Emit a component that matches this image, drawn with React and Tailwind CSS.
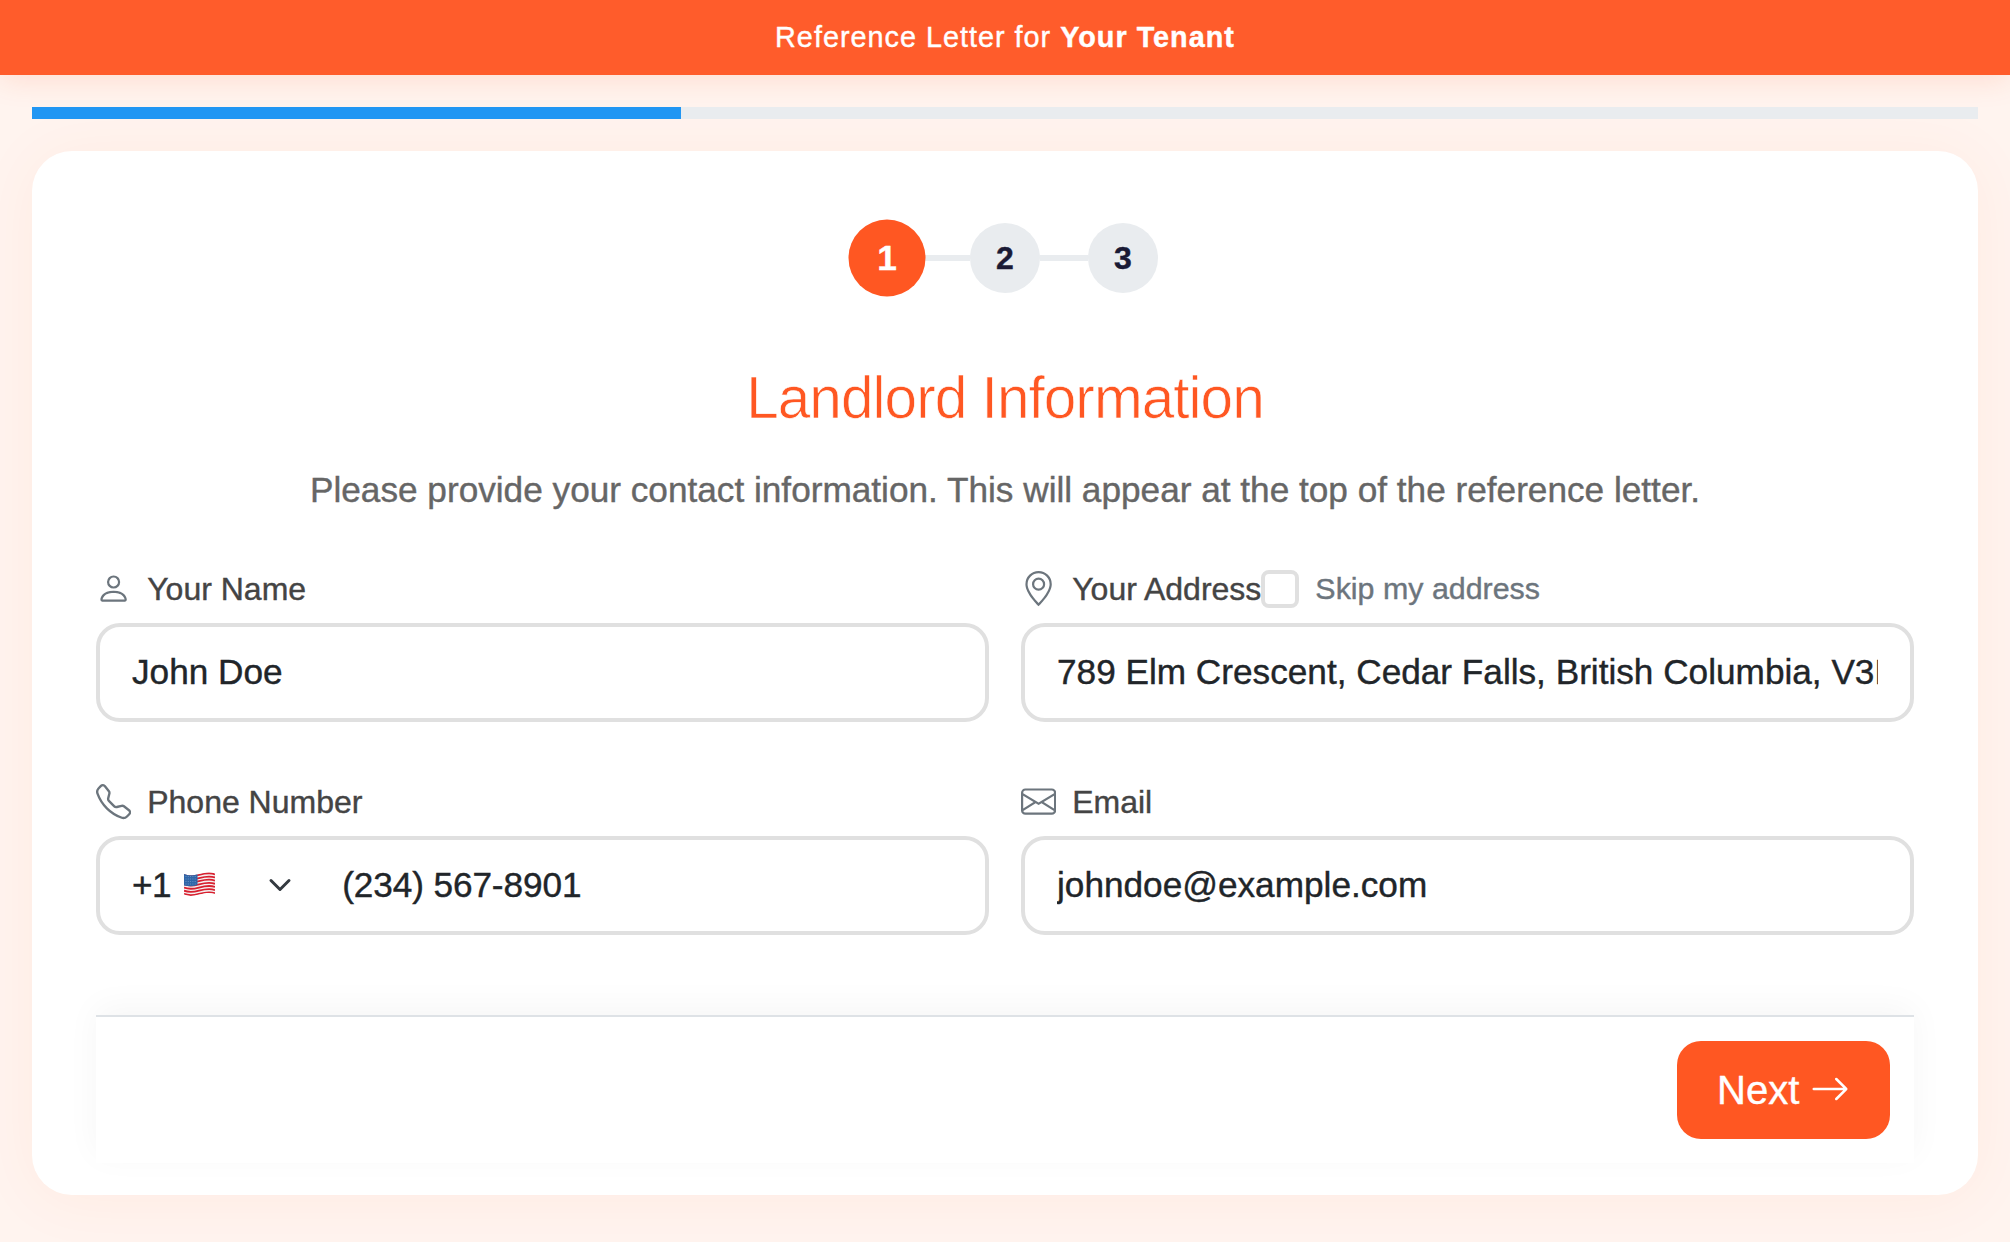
import React from "react";
import { BsPerson, BsGeoAlt, BsTelephone, BsEnvelope, BsArrowRight } from "react-icons/bs";

function Flag() {
  const stripes = [0, 1, 2, 3, 4, 5, 6];
  const wave = (y) =>
    `M0 ${y} C5 ${y + 2} 9 ${y + 1.6} 15 ${y} S26 ${y - 2.4} 31 ${y - 0.6}`;
  return (
    <svg className="ml-[13px] -mt-0.5 h-[25px] w-[31px] shrink-0" viewBox="0 0 31 25">
      <clipPath id="flag">
        <path d="M0 2 C5 4 9 3.6 15 2 S26 -.4 31 1.4 V22 C26 20.2 21 21 15 22.6 S5 24.6 0 22.6 Z" />
      </clipPath>
      <g clipPath="url(#flag)">
        <rect width="31" height="25" fill="#f4f1f1" />
        {stripes.map((i) => (
          <path key={i} d={wave(2.9 + i * 3.16)} stroke="#d8202f" strokeWidth="1.8" fill="none" />
        ))}
        <path d="M0 0 H13.5 V13 C9 14.6 5 14.8 0 13.6 Z" fill="#2f66a8" />
        {[4.5, 7, 9.5, 12].map((y) => (
          <path key={y} d={`M1.5 ${y} H13`} stroke="#7fa5cf" strokeWidth=".7" strokeDasharray="1 1.3" />
        ))}
      </g>
    </svg>
  );
}

function Label({ icon: Icon, children }) {
  return (
    <span className="flex items-center gap-4 text-[32px] leading-[48px] text-[#444]">
      <Icon className="size-[35.2px] shrink-0 text-[#6c757d]" />
      {children}
    </span>
  );
}

const box =
  "h-[99px] w-full rounded-3xl border-4 border-[#e0e0e0] bg-white text-[35.2px] text-[#212529] outline-none";

function Step({ n, active }) {
  return (
    <div
      className={
        active
          ? "flex size-[70px] scale-110 items-center justify-center rounded-full bg-[#ff5722] text-[32px] font-bold text-white"
          : "flex size-[70px] items-center justify-center rounded-full bg-[#e9ecef] text-[32px] font-bold text-[#1a1a35]"
      }
    >
      {n}
    </div>
  );
}

export default function App() {
  return (
    <div className="h-[1242px] w-full overflow-hidden bg-[#fff4ef] font-['Liberation_Sans',Arial,sans-serif] [-webkit-text-stroke:0.4px]">
      <header className="flex h-[75px] items-center justify-center bg-[#ff5c2b] text-[28.8px] tracking-[1px] whitespace-pre text-white shadow-[0_4px_30px_rgba(255,87,34,0.15)]">
        <span>Reference Letter for </span>
        <strong>Your Tenant</strong>
      </header>

      <div className="relative mx-8 mt-8 h-3 bg-[#e9ecef]">
        <div className="h-full w-1/3 bg-[#2196f3]" />
      </div>

      <main className="mx-8 mt-8 flex h-[1044px] flex-col rounded-[40px] bg-white px-16 pt-[72px] pb-8 shadow-[0_4px_64px_rgba(255,87,34,0.06)]">
        <div className="flex h-[70px] items-center justify-center">
          <Step n="1" active />
          <div className="h-1.5 w-12 bg-[#e9ecef]" />
          <Step n="2" />
          <div className="h-1.5 w-12 bg-[#e9ecef]" />
          <Step n="3" />
        </div>

        <h1 className="mt-[70px] text-center text-[58.5px] leading-[70px] tracking-[-0.95px] text-[#ff5722] [-webkit-text-stroke:0.7px_white]">
          Landlord Information
        </h1>
        <p className="mt-[30px] text-center text-[35.2px] leading-[53px] text-[#666]">
          Please provide your contact information. This will appear at the top of the reference letter.
        </p>

        <form className="mt-[49px] grid grid-cols-2 gap-x-8 gap-y-14">
          <div className="flex flex-col gap-[10px]">
            <Label icon={BsPerson}>Your Name</Label>
            <input className={box + " px-8 pb-0.5"} defaultValue="John Doe" />
          </div>

          <div className="flex flex-col gap-[10px]">
            <div className="flex h-12 items-center">
              <Label icon={BsGeoAlt}>Your Address</Label>
              <label className="flex items-center gap-4 text-[30.4px] leading-[48px] text-[#6c757d]">
                <input type="checkbox" className="size-[38px] appearance-none rounded-lg border-4 border-[#e0e0e0] bg-white" />
                <span className="-mt-0.5">Skip my address</span>
              </label>
            </div>
            <input className={box + " px-8 pb-0.5"} defaultValue="789 Elm Crescent, Cedar Falls, British Columbia, V3L 2K8" />
          </div>

          <div className="flex flex-col gap-[10px]">
            <Label icon={BsTelephone}>Phone Number</Label>
            <div className={box + " flex items-center pl-8"}>
              <span className="tracking-[-0.5px]">+1</span>
              <Flag />
              <svg className="ml-[53px] -mt-0.5 size-6 shrink-0" viewBox="0 0 16 16" fill="none">
                <path d="m2 5 6 6 6-6" stroke="#343a40" strokeWidth="2" strokeLinecap="round" strokeLinejoin="round" />
              </svg>
              <input className="ml-[50px] min-w-0 flex-1 tracking-[-0.1px] outline-none" defaultValue="(234) 567-8901" />
            </div>
          </div>

          <div className="flex flex-col gap-[10px]">
            <Label icon={BsEnvelope}>Email</Label>
            <input className={box + " px-8 pb-0.5"} defaultValue="johndoe@example.com" />
          </div>
        </form>

        <footer className="mt-auto flex h-[148px] items-center justify-end border-t-2 border-[#dee2e6] bg-white px-6 shadow-[0_-8px_32px_rgba(0,0,0,0.04)]">
          <button className="flex h-[98px] w-[213px] items-center gap-[11px] rounded-3xl bg-[#ff5722] pl-10 text-[40px] text-white">
            Next
            <BsArrowRight className="-mt-0.5 size-10" />
          </button>
        </footer>
      </main>
    </div>
  );
}
